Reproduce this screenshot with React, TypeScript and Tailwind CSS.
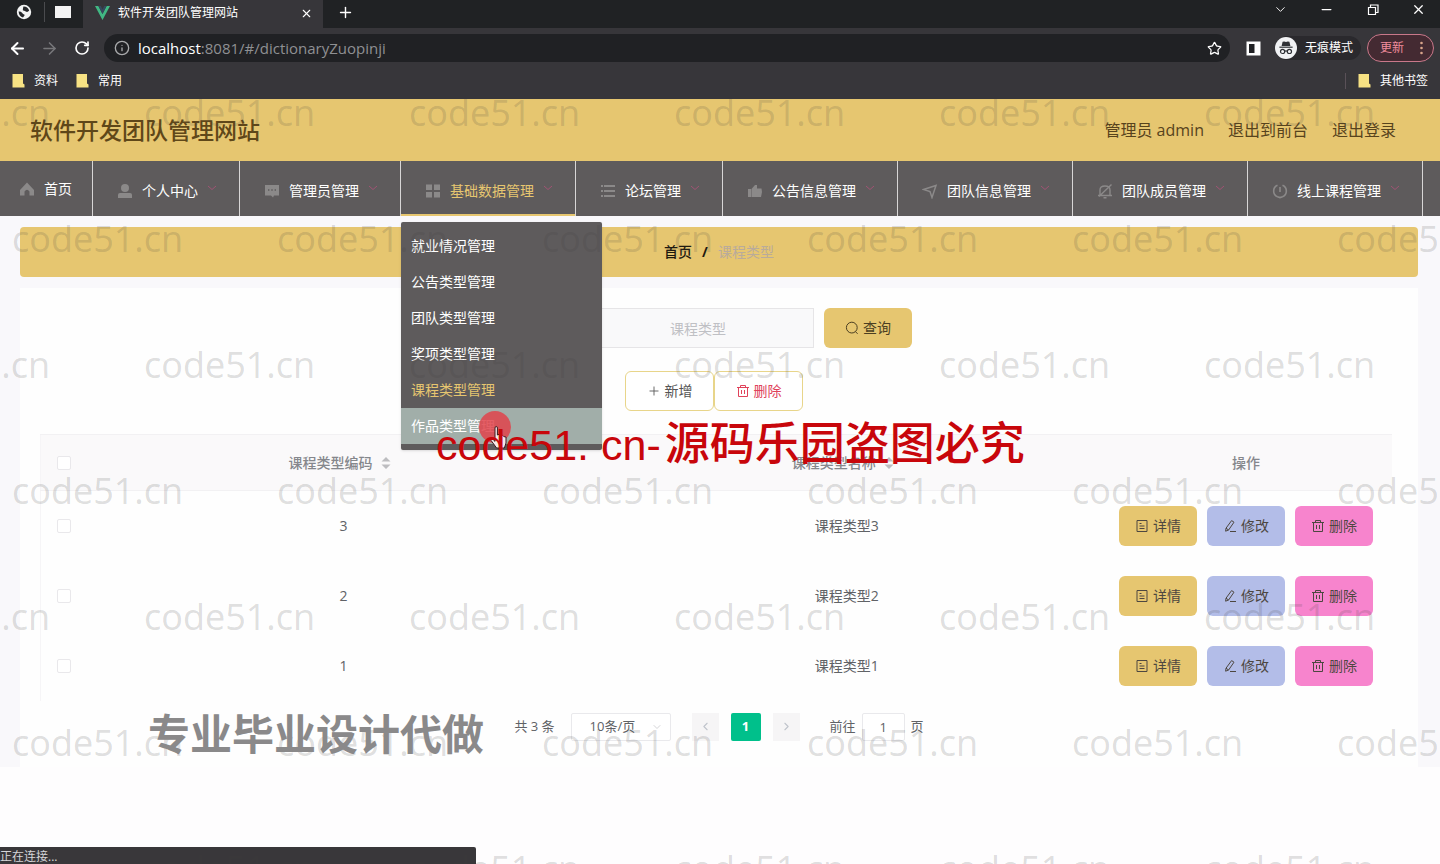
import type { ReactNode } from "react";
import {
  ArrowLeft,
  ArrowRight,
  ChevronDown,
  ChevronLeft,
  ChevronRight,
  Info,
  Minus,
  Plus,
  RotateCw,
  Star,
  X,
} from "lucide-react";

const CJK = "font-['Open_Sans','Noto_Sans_CJK_SC',sans-serif]";

function Folder() {
  return (
    <svg width="13" height="15" viewBox="0 0 13 15" aria-hidden="true">
      <path d="M0.5 1H11V10.5L12.5 11.5V14.5H0.5Z" fill="#f7e283" />
    </svg>
  );
}

function Globe() {
  return (
    <svg width="16" height="16" viewBox="0 0 16 16" aria-hidden="true">
      <circle cx="8" cy="8" r="7.2" fill="#f3f4f4" />
      <path d="M2.6 7.6Q5 7.4 6 8.8T8.2 10.6 7 13.6Q3 12.6 2.6 7.6Z" fill="#26282b" />
      <path d="M7.4 2.6Q11.6 2.4 13.2 6.6 11.6 8.6 9.8 7.6T7.2 6.6 7.4 2.6Z" fill="#26282b" />
    </svg>
  );
}

function Incognito() {
  return (
    <svg width="22" height="22" viewBox="0 0 22 22" aria-hidden="true">
      <circle cx="11" cy="11" r="11" fill="#f1f2f4" />
      <path d="M7.6 4.8 9.2 4.4 11 5 12.8 4.4 14.4 4.8 15.4 9H6.6Z" fill="#2f3136" />
      <path d="M4.4 10.2H17.6" stroke="#2f3136" strokeWidth="1.2" />
      <g fill="none" stroke="#2f3136" strokeWidth="1.2">
        <circle cx="7.6" cy="14.4" r="2.1" />
        <circle cx="14.4" cy="14.4" r="2.1" />
        <path d="M9.7 14.2Q11 13.4 12.3 14.2" />
      </g>
    </svg>
  );
}

function Trash() {
  return (
    <svg width="14" height="14" viewBox="0 0 14 14" fill="none" stroke="currentColor" aria-hidden="true">
      <path d="M1 3.5H13M2.5 3.5V12.5H11.5V3.5M4.5 3.5V1.5H9.5V3.5M5.5 6V10M8.5 6V10" />
    </svg>
  );
}

function Doc() {
  return (
    <svg width="14" height="14" viewBox="0 0 14 14" fill="none" stroke="currentColor" aria-hidden="true">
      <path d="M2 1.5H12V12.5H2ZM4.5 4.5H6.5M4.5 7H9.5M4.5 9.5H9.5" />
    </svg>
  );
}

function Pen() {
  return (
    <svg width="14" height="14" viewBox="0 0 14 14" fill="none" stroke="currentColor" aria-hidden="true">
      <path d="M8.6 1.6 11 3.2 5.6 11 2.6 12.2 3 9.2ZM7 12.5H13M3 9.2 5.6 11" />
    </svg>
  );
}

function SearchGlyph() {
  return (
    <svg width="14" height="14" viewBox="0 0 14 14" fill="none" stroke="currentColor" aria-hidden="true">
      <circle cx="6.8" cy="6.6" r="5.4" />
      <path d="M10.4 10.6 12.6 12.8" />
    </svg>
  );
}

const glyphs: Record<string, ReactNode> = {
  home: <path d="M8 1.5 15 9V14.5H10.5V10.5Q8 7 5.5 10.5V14.5H1V9Z" fill="currentColor" />,
  user: (
    <g fill="currentColor">
      <circle cx="8" cy="5" r="4" />
      <path d="M1 15V12Q1 10 3 10H13Q15 10 15 12V15Z" />
    </g>
  ),
  chat: (
    <g fill="currentColor">
      <path d="M1 2H15V12.5H10L9 14.5 7 12.5H1Z" />
      <path d="M4 7H5.4M7.3 7H8.7M10.6 7H12" stroke="#5e5b5c" strokeWidth="1.4" />
    </g>
  ),
  grid: (
    <g fill="currentColor">
      <path d="M1 1.5H7V7H1ZM9 1.5H15V7H9ZM1 9H7V14.5H1ZM9 9H15V14.5H9Z" />
    </g>
  ),
  list: <path d="M1 3H3M4 3H15M1 8H3M4 8H15M1 13H3M4 13H15" stroke="currentColor" strokeWidth="2" />,
  thumb: <path d="M1 6H4V14H1ZM4.5 6 8 2H10V5.5H14.5L15 9 14 14H4.5Z" fill="currentColor" />,
  send: <path d="M1.5 6.5 14 2.5 10 14.5 8 8.5Z" fill="none" stroke="currentColor" strokeWidth="1.5" />,
  bell: (
    <path
      d="M3 12.5V7Q3 3 8 3T13 7V12.5M1 12.5H15M6.5 14.8H9.5M14.5 1.5 2 13.5"
      fill="none"
      stroke="currentColor"
      strokeWidth="1.4"
    />
  ),
  power: (
    <path
      d="M5.5 2.2A6.3 6.3 0 0 0 5.5 13.8M10.5 2.2A6.3 6.3 0 0 1 10.5 13.8M8 4V9M5.5 13.8 8 14.6 10.5 13.8"
      fill="none"
      stroke="currentColor"
      strokeWidth="1.6"
    />
  ),
};

const navItems = [
  { icon: "home", text: "首页" },
  { icon: "user", text: "个人中心" },
  { icon: "chat", text: "管理员管理" },
  { icon: "grid", text: "基础数据管理" },
  { icon: "list", text: "论坛管理" },
  { icon: "thumb", text: "公告信息管理" },
  { icon: "send", text: "团队信息管理" },
  { icon: "bell", text: "团队成员管理" },
  { icon: "power", text: "线上课程管理" },
];

const subItems = ["就业情况管理", "公告类型管理", "团队类型管理", "奖项类型管理", "课程类型管理", "作品类型管理"];

const rows = [3, 2, 1];

function Browser() {
  return (
    <div className="bg-[#37363a] text-white">
      <div className="flex h-7 bg-[#202224]">
        <div className="flex w-[83px] items-center pb-1">
          <span className="ml-4">
            <Globe />
          </span>
          <span className="ml-3 h-5 w-px bg-[#4a4b4e]" />
          <span className="ml-2.5 h-3 w-4 bg-[#f3f3f3]" />
        </div>
        <div className="flex w-60 items-center bg-[#37363a] pb-0.5 pl-3">
          <svg width="15" height="14" viewBox="0 0 15 14" aria-hidden="true">
            <path d="M0 0H3.4L7.5 8 11.6 0H15L7.5 14Z" fill="#41b883" />
            <path d="M3.4 0H5.8L7.5 3.6 9.2 0H11.6L7.5 8Z" fill="#35495e" />
          </svg>
          <span className="ml-2 flex-1 text-xs leading-4">软件开发团队管理网站</span>
          <button aria-label="关闭标签页" className="mr-2.5">
            <X size={13} />
          </button>
        </div>
        <button aria-label="新标签页" className="mb-1 ml-3.5">
          <Plus size={17} />
        </button>
        <div className="ml-auto flex items-start gap-[31px] pt-0.5 pr-3.5">
          <button aria-label="搜索标签页">
            <ChevronDown size={15} strokeWidth={1.5} />
          </button>
          <button aria-label="最小化">
            <Minus size={15} strokeWidth={2} />
          </button>
          <button aria-label="还原" className="pt-0.5">
            <svg width="15" height="12" viewBox="0 0 15 12" fill="none" stroke="white" strokeWidth="1.2" aria-hidden="true">
              <path d="M3.5 3.5H10.5V10.5H3.5ZM5.5 3V1H13V8.5H11" />
            </svg>
          </button>
          <button aria-label="关闭">
            <X size={15} strokeWidth={2} />
          </button>
        </div>
      </div>
      <div className="flex h-10 items-center pr-1.5 pl-2">
        <button aria-label="后退" className="w-8">
          <ArrowLeft size={19} strokeWidth={2.5} />
        </button>
        <button aria-label="前进" className="w-8 text-[#77777a]">
          <ArrowRight size={19} />
        </button>
        <button aria-label="刷新" className="w-8 pl-0.5">
          <RotateCw size={16} strokeWidth={2.5} />
        </button>
        <div className="flex h-7 flex-1 items-center rounded-full bg-[#202124] pr-2 pl-2.5">
          <Info size={16} className="text-[#a9aaac]" />
          <span className={`ml-2 flex-1 text-[15px] leading-5 text-[#8f9093] ${CJK}`}>
            <span className="text-white">localhost</span>:8081/#/dictionaryZuopinji
          </span>
          <Star size={15} />
        </div>
        <svg className="ml-4 shrink-0" width="15" height="15" viewBox="0 0 15 15" aria-hidden="true">
          <path d="M0.5 0.5H14.5V14.5H0.5Z" fill="white" />
          <path d="M3 3H8.5V12H3Z" fill="#202124" />
        </svg>
        <div className="ml-3.5 flex h-6 items-center gap-2 rounded-full bg-[#2a292d] pr-2 text-xs">
          <Incognito />
          无痕模式
        </div>
        <button className="ml-1.5 flex h-7 w-[67px] items-center justify-between rounded-full border border-[#c9788a] bg-[#442a32] pr-2.5 pl-3 text-xs text-[#f08c9c]">
          更新
          <svg width="3" height="14" viewBox="0 0 3 14" fill="#d9a58a" aria-hidden="true">
            <circle cx="1.5" cy="2" r="1.3" />
            <circle cx="1.5" cy="7" r="1.3" />
            <circle cx="1.5" cy="12" r="1.3" />
          </svg>
        </button>
      </div>
      <div className="flex h-[31px] items-center pr-3 pb-1.5 pl-3 text-xs">
        <Folder />
        <span className="ml-[9px]">资料</span>
        <span className="ml-[18px]">
          <Folder />
        </span>
        <span className="ml-[9px]">常用</span>
        <span className="ml-auto h-4 w-px bg-[#5a5158]" />
        <span className="ml-3">
          <Folder />
        </span>
        <span className="ml-[9px]">其他书签</span>
      </div>
    </div>
  );
}

function SubMenu() {
  return (
    <div className="absolute top-full left-0 z-10 mt-1.5 w-[201px] rounded-xs bg-[#5e5b5c] py-1.5 shadow-sm">
      {subItems.map((t, i) => (
        <a
          key={t}
          href="#"
          className={`flex h-9 items-center px-2.5 ${
            i === 4 ? "text-[#e6c670]" : i === 5 ? "bg-[#a1aea9] text-white" : "text-white"
          }`}
        >
          {t}
        </a>
      ))}
      <svg className="absolute bottom-0 left-[77px]" width="34" height="42" viewBox="0 0 34 42" aria-hidden="true">
        <circle cx="17" cy="19" r="16" fill="#e0434b" fillOpacity="0.85" />
        <path
          d="M17 20Q17 18.5 18.2 18.5T19.4 20V27L21 26.4 22.6 27.4 24.6 27.4 25.8 28.6 28 29V35L26.4 40H18.6L13 32.4Q13.4 30.4 15.4 31.8L17 33.4Z"
          fill="#f6e9e9"
          stroke="#3a1d20"
        />
      </svg>
    </div>
  );
}

function Nav() {
  return (
    <nav className="flex h-[55px] bg-[#5e5b5c] text-sm whitespace-nowrap text-white">
      {navItems.map((item, i) => {
        const open = i === 3;
        return (
          <div key={item.text} className="relative flex border-r border-[#d8d6d6]">
            <a
              href="#"
              className={`flex items-center gap-[5px] border-b-2 ${i === 0 ? "pt-0.5 pr-5 pl-[15px]" : "pt-1.5 pr-[22px] pl-5"} ${
                open ? "border-[#e6c670] text-[#e6c670]" : "border-transparent"
              }`}
            >
              <span className="flex w-6 justify-center text-[#8b8989]">
                <svg width="16" height="16" viewBox="0 0 16 16" aria-hidden="true">
                  {glyphs[item.icon]}
                </svg>
              </span>
              {item.text}
              {i > 0 && (
                <span className="flex h-3 w-3.5 items-start justify-end text-[#a05374]">
                  <svg width="10" height="6" viewBox="0 0 10 6" fill="none" stroke="currentColor" aria-hidden="true">
                    <path d="M1 1 5 4.5 9 1" />
                  </svg>
                </span>
              )}
            </a>
            {open && <SubMenu />}
          </div>
        );
      })}
    </nav>
  );
}

function Sorter() {
  return (
    <svg width="10" height="14" viewBox="0 0 10 14" fill="#bdbdc0" aria-hidden="true">
      <path d="M5 1 9.5 5.5H0.5ZM5 13 0.5 8.5H9.5Z" />
    </svg>
  );
}

function Check({ label }: { label: string }) {
  return (
    <input
      type="checkbox"
      aria-label={label}
      className="block size-3.5 appearance-none rounded-xs border border-[#e9e8eb] bg-white"
    />
  );
}

const rowBtn = "flex h-10 w-[78px] items-center justify-center gap-1 rounded-md text-[#4d4740]";

function DataTable() {
  return (
    <table className="w-full table-fixed border-l border-[#f6f5f7] text-sm text-[#606266]">
      <colgroup>
        <col className="w-[53px]" />
        <col className="w-[37%]" />
        <col />
        <col className="w-[292px]" />
      </colgroup>
      <thead>
        <tr className="h-14 border-t border-b border-[#f2f1f3] bg-[#faf9fa] text-[#85878c]">
          <th className="pl-4">
            <Check label="全选" />
          </th>
          <th className="font-medium">
            <span className="flex items-center justify-center gap-2 pr-2">
              课程类型编码
              <Sorter />
            </span>
          </th>
          <th className="font-medium">
            <span className="flex items-center justify-center gap-2 pr-2">
              课程类型名称
              <Sorter />
            </span>
          </th>
          <th className="font-medium">操作</th>
        </tr>
      </thead>
      <tbody>
        {rows.map((n) => (
          <tr key={n} className="h-[70px] text-center">
            <td className="pl-4">
              <Check label={`选择课程类型${n}`} />
            </td>
            <td>{n}</td>
            <td>课程类型{n}</td>
            <td>
              <div className="flex justify-center gap-2.5">
                <button className={`${rowBtn} bg-[#e6c670]`}>
                  <Doc />
                  详情
                </button>
                <button className={`${rowBtn} bg-[#b3bde8]`}>
                  <Pen />
                  修改
                </button>
                <button className={`${rowBtn} bg-[#f784cd]`}>
                  <Trash />
                  删除
                </button>
              </div>
            </td>
          </tr>
        ))}
      </tbody>
    </table>
  );
}

function Pagination() {
  return (
    <div className="flex h-7 items-center justify-center text-[13px] text-[#606266]">
      <span>共 3 条</span>
      <span className="relative ml-4 flex">
        <select
          aria-label="每页条数"
          className="h-7 w-[100px] appearance-none rounded-xs border border-[#e9e9ec] bg-white pl-[18px]"
        >
          <option>10条/页</option>
        </select>
        <ChevronDown size={12} className="absolute top-2 right-2 text-[#d5d5d8]" />
      </span>
      <button aria-label="上一页" className="ml-[21px] flex h-7 w-[27px] items-center justify-center bg-[#f6f5f6] text-[#c0c4cc]">
        <ChevronLeft size={13} />
      </button>
      <button className="ml-3 h-7 w-[30px] rounded-xs bg-[#00c08b] font-bold text-white">1</button>
      <button aria-label="下一页" className="ml-3 flex h-7 w-[27px] items-center justify-center bg-[#f6f5f6] text-[#c0c4cc]">
        <ChevronRight size={13} />
      </button>
      <label className="ml-[30px] flex items-center gap-1.5">
        前往
        <input defaultValue="1" className="h-7 w-[43px] rounded-xs border border-[#e9e9ec] bg-white text-center" />
        页
      </label>
    </div>
  );
}

function Watermarks() {
  return (
    <div
      aria-hidden="true"
      className={`pointer-events-none absolute inset-0 z-20 overflow-hidden pt-[86px] text-4xl text-[#404040]/18 ${CJK}`}
    >
      {[0, 1, 2, 3, 4, 5, 6].map((r) => (
        <div key={r} className={`flex h-[126px] ${r % 2 ? "ml-3" : "-ml-[121px]"}`}>
          {[0, 1, 2, 3, 4, 5].map((c) => (
            <span key={c} className="w-[265px] shrink-0 leading-[54px]">
              code51.cn
            </span>
          ))}
        </div>
      ))}
    </div>
  );
}

export default function App() {
  return (
    <div className={`relative min-h-screen overflow-hidden bg-[#fefdfe] ${CJK}`}>
      <Browser />
      <header className="flex h-[62px] items-center justify-between bg-[#e6c670] pr-11 pl-[30px] text-[#5f4719]">
        <h1 className="text-[23px] leading-8 font-medium">软件开发团队管理网站</h1>
        <div className="flex gap-6 text-base text-[#57431d]">
          <span>管理员 admin</span>
          <a href="#">退出到前台</a>
          <a href="#">退出登录</a>
        </div>
      </header>
      <Nav />
      <main className="bg-[#f9f8fb] pt-[11px] pr-[22px] pl-5">
        <div className="flex h-[50px] items-center justify-center gap-2.5 rounded-sm bg-[#e6c670] text-sm text-[#1f1a10]">
          <a href="#" className="font-medium">
            首页
          </a>
          <span className="font-bold">/</span>
          <span className="text-[#b9ab9b]">课程类型</span>
        </div>
        <section className="mt-[11px] bg-[#fefefe] px-5 pt-5 pb-[26px]">
          <form className="flex justify-center gap-2.5 text-sm">
            <label className="pl-14">
              <input
                aria-label="课程类型"
                placeholder="课程类型"
                className="h-10 w-[232px] border border-[#e6e5e7] bg-[#f9f9fa] text-center placeholder:text-[#bfc0c4]"
              />
            </label>
            <button
              type="button"
              className="flex h-10 w-[88px] items-center justify-center gap-1 rounded-md bg-[#e6c670] text-[#4b3f22]"
            >
              <SearchGlyph />
              查询
            </button>
          </form>
          <div className="mt-[23px] mb-[23px] flex justify-center pr-2.5 text-sm">
            <button className="flex h-10 w-[89px] items-center justify-center gap-1 rounded-md border border-[#e8d58a] bg-white text-[#555]">
              <Plus size={14} strokeWidth={1.5} />
              新增
            </button>
            <button className="flex h-10 w-[89px] items-center justify-center gap-1 rounded-md border border-[#e8d58a] bg-white text-[#e0425a]">
              <Trash />
              删除
            </button>
          </div>
          <div className="pr-1.5">
            <DataTable />
          </div>
          <div className="mt-3">
            <Pagination />
          </div>
        </section>
      </main>
      <div className="absolute bottom-0 left-0 h-[17px] w-[476px] overflow-hidden rounded-tr-xs bg-[#39373a] pt-0.5 text-xs leading-4 text-[#d5d5d8]">
        正在连接...
      </div>
      <Watermarks />
      <p className="absolute top-[702px] left-[148px] z-30 text-[42px] leading-[64px] font-bold text-[#8a898a]">
        专业毕业设计代做
      </p>
      <p className="absolute top-[413px] left-[436px] z-30 flex gap-1 font-['Liberation_Sans','Noto_Sans_CJK_SC',sans-serif] text-[45px] leading-[64px] whitespace-nowrap text-[#c8060b]">
        <span className="text-[43px]">code51. cn-</span>
        <span className="font-medium">源码乐园盗图必究</span>
      </p>
    </div>
  );
}
